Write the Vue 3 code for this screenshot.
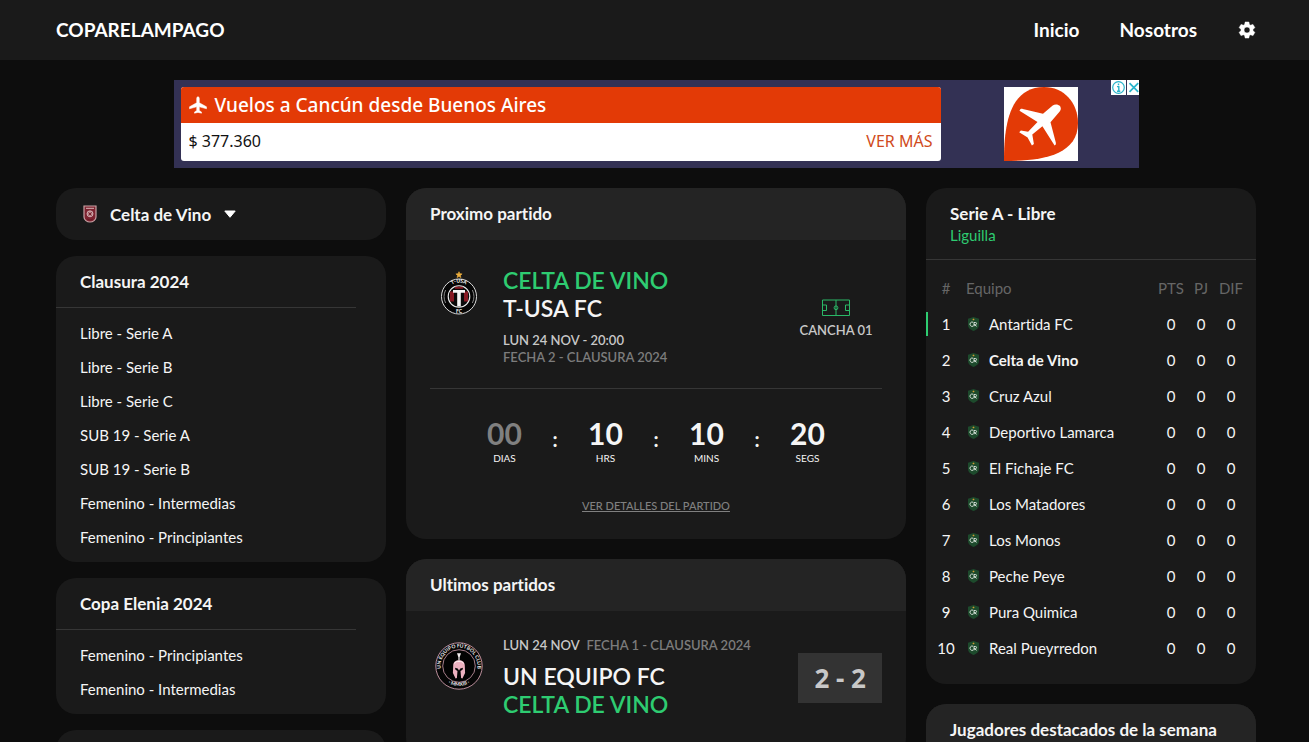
<script setup>
import { ref } from 'vue'

const club = ref('Celta de Vino')

const tournaments = [
  {
    name: 'Clausura 2024',
    series: [
      'Libre - Serie A',
      'Libre - Serie B',
      'Libre - Serie C',
      'SUB 19 - Serie A',
      'SUB 19 - Serie B',
      'Femenino - Intermedias',
      'Femenino - Principiantes',
    ],
  },
  { name: 'Copa Elenia 2024', series: ['Femenino - Principiantes', 'Femenino - Intermedias'] },
]

const countdown = [
  { value: '00', label: 'DIAS', idle: true },
  { value: '10', label: 'HRS' },
  { value: '10', label: 'MINS' },
  { value: '20', label: 'SEGS' },
]

const standings = [
  'Antartida FC',
  'Celta de Vino',
  'Cruz Azul',
  'Deportivo Lamarca',
  'El Fichaje FC',
  'Los Matadores',
  'Los Monos',
  'Peche Peye',
  'Pura Quimica',
  'Real Pueyrredon',
].map((team, i) => ({ pos: i + 1, team, pts: 0, pj: 0, dif: 0 }))
</script>

<template>
  <div class="page">
    <header class="topbar">
      <a class="brand" href="#">COPARELAMPAGO</a>
      <nav class="nav">
        <a href="#">Inicio</a>
        <a href="#">Nosotros</a>
        <button class="gear" type="button" aria-label="Ajustes">
          <svg viewBox="0 0 24 24" width="20" height="20" fill="#fff">
            <path d="M19.14 12.94c.04-.3.06-.61.06-.94 0-.32-.02-.64-.07-.94l2.03-1.58a.49.49 0 0 0 .12-.61l-1.92-3.32a.49.49 0 0 0-.59-.22l-2.39.96c-.5-.38-1.03-.7-1.62-.94l-.36-2.54a.48.48 0 0 0-.48-.41h-3.84c-.24 0-.43.17-.47.41l-.36 2.54c-.59.24-1.13.57-1.62.94l-2.39-.96a.49.49 0 0 0-.59.22L2.74 8.87c-.12.21-.08.47.12.61l2.03 1.58c-.05.3-.09.63-.09.94s.02.64.07.94l-2.03 1.58a.49.49 0 0 0-.12.61l1.92 3.32c.12.22.37.29.59.22l2.39-.96c.5.38 1.03.7 1.62.94l.36 2.54c.05.24.24.41.48.41h3.84c.24 0 .44-.17.47-.41l.36-2.54c.59-.24 1.13-.56 1.62-.94l2.39.96c.22.08.47 0 .59-.22l1.92-3.32a.49.49 0 0 0-.12-.61l-2.01-1.58zM12 15.600A3.600 3.600 0 1 1 12 8.400a3.600 3.600 0 0 1 0 7.200z" stroke="#fff" stroke-width=".6" />
          </svg>
        </button>
      </nav>
    </header>

    <main class="content">
      <aside class="ad">
        <div class="ad-offer">
          <div class="ad-title">
            <svg viewBox="0 0 18 18" width="18" height="18" fill="#fff">
              <path d="M9 .8c.9 0 1.300.8 1.300 1.800v4.100l7.200 4.100v2l-7.200-2v3.700l2.200 1.500v1.200L9 16.400l-3.500.8V16l2.200-1.500v-3.700L.5 12.800v-2l7.200-4.100V2.600C7.700 1.600 8.100.8 9 .8z" stroke="#fff" stroke-width=".5" />
            </svg>
            <span>Vuelos a Cancún desde Buenos Aires</span>
          </div>
          <div class="ad-price">
            <span>$ 377.360</span>
            <a href="#">VER MÁS</a>
          </div>
        </div>
        <div class="ad-side">
          <svg viewBox="0 0 74 74" width="74" height="74">
            <rect width="74" height="74" fill="#fff" />
            <path d="M0 74C0 42 4 0 40 0c20 0 34 16 34 36C74 70 34 74 0 74z" fill="#e33a06" />
            <path d="M15.500 23.800c.4-1.700 1.600-2.300 3.300-1.900L39 26.700l9.700-8.200c1.800-1.500 5-1.500 6.700.1 1.800 1.700 1.900 4 .3 6L46.500 35.200l5.300 20.300c.3 1.500-.1 2.500-1.200 3L38.400 39.300 28.300 47.500l1.600 9.500-2 1.500-4.300-8.100-8.400-5.100 1.700-1.800 7.200 1.300 9.400-9.900z" fill="#fff" />
          </svg>
        </div>
        <div class="ad-marks">
          <button type="button" aria-label="Información del anuncio">
            <svg viewBox="0 0 15 15" width="15" height="15" fill="none" stroke="#29b4cb">
              <circle cx="7.500" cy="7.500" r="5.800" stroke-width="1.200" />
              <path d="M7.500 3.500v1.700M6 6.600h1.800V11M6 11.200h3.300" stroke-width="1.400" />
            </svg>
          </button>
          <button type="button" aria-label="Cerrar anuncio">
            <svg viewBox="0 0 12 15" width="12" height="15" fill="none" stroke="#29b4cb" stroke-width="1.700">
              <path d="M2.500 3.200l8.700 8.700M11.200 3.200l-8.700 8.700" />
            </svg>
          </button>
        </div>
      </aside>

      <div class="columns">
        <section class="col col-left">
          <div class="card picker">
            <svg class="picker-crest" viewBox="0 0 14 18" width="14" height="18">
              <path d="M1 1h12v11c0 3-3 5-6 5s-6-2-6-5z" fill="#7d2330" stroke="#c9a3a6" stroke-width="1.200" />
              <path d="M3 3.300h8" stroke="#d8b8ba" stroke-width="1" />
              <circle cx="7" cy="8.800" r="3" fill="#b77d83" stroke="#e3cfd0" stroke-width=".7" />
              <path d="M5.500 7.500l3 3M8.600 7.400l-3 2.900M4 14l3 1 3-1" stroke="#6a1722" stroke-width=".9" fill="none" />
            </svg>
            <label class="picker-label">
              <select v-model="club" aria-label="Club">
                <option>Celta de Vino</option>
              </select>
              <svg viewBox="0 0 12 8" width="12" height="8" fill="#fff"><path d="M.8 1h10.400L6 7.300z" stroke="#fff" stroke-linejoin="round" /></svg>
            </label>
          </div>

          <div v-for="t in tournaments" :key="t.name" class="card">
            <h2 class="list-title">{{ t.name }}</h2>
            <ul class="series">
              <li v-for="s in t.series" :key="s"><a href="#">{{ s }}</a></li>
            </ul>
          </div>
          <div class="card card-stub"></div>
        </section>

        <section class="col col-mid">
          <article class="card">
            <h2 class="card-head">Proximo partido</h2>
            <div class="card-body">
              <div class="match">
                <div class="crest">
                  <svg viewBox="0 0 48 56" width="48" height="56">
                    <defs>
                      <path id="tusa-arc" d="M11.500 28a12.500 12.500 0 0 1 25 0" />
                    </defs>
                    <path d="M24 4.700l.9 2 2.200.2-1.700 1.500.5 2.200-1.900-1.200-1.900 1.200.5-2.200-1.700-1.500 2.200-.2z" fill="#edae3c" stroke="#edae3c" stroke-width=".6" />
                    <circle cx="24" cy="29.500" r="17.500" fill="#050505" stroke="#dcdcdc" stroke-width="1" />
                    <path d="M10.600 23a15 15 0 0 0 0 13M37.400 23a15 15 0 0 1 0 13" stroke="#a8a8a8" stroke-width=".8" fill="none" />
                    <circle cx="24" cy="29.500" r="10.800" fill="#0a0a0a" stroke="#ececec" stroke-width="1.100" />
                    <path d="M15 24.500h4v10h-4zM29 24.500h4v10h-4zM20 19.700h8v2h-8z" fill="#861923" />
                    <path d="M18 23h12v2.700h-4.200v13.800h-3.600V25.700H18z" fill="#f5f5f5" />
                    <text class="ring-text" fill="#fff"><textPath href="#tusa-arc" startOffset="50%" text-anchor="middle">T-USA</textPath></text>
                    <text class="ring-text" x="24" y="45.500" text-anchor="middle" fill="#fff">FC</text>
                  </svg>
                </div>
                <div class="match-info">
                  <p class="team own">CELTA DE VINO</p>
                  <p class="team">T-USA FC</p>
                  <p class="when below">LUN 24 NOV - 20:00</p>
                  <p class="when round">FECHA 2 - CLAUSURA 2024</p>
                </div>
                <div class="pitch">
                  <svg viewBox="0 0 28 18" width="28" height="18" fill="none" stroke="#2ab867">
                    <path d="M.5 1h27v15.500H.5zM14 1v15.500M.5 6h4v5.500h-4M27.500 6h-4v5.500h4" />
                    <circle cx="14" cy="8.800" r="1.900" />
                  </svg>
                  <span>CANCHA 01</span>
                </div>
              </div>

              <div class="countdown">
                <template v-for="(c, i) in countdown" :key="c.label">
                  <span v-if="i" class="colon">:</span>
                  <div class="unit" :class="{ idle: c.idle }">
                    <strong>{{ c.value }}</strong>
                    <span>{{ c.label }}</span>
                  </div>
                </template>
              </div>
              <a class="details" href="#">VER DETALLES DEL PARTIDO</a>
            </div>
          </article>

          <article class="card">
            <h2 class="card-head">Ultimos partidos</h2>
            <div class="card-body last">
              <div class="match played">
                <div class="crest low">
                  <svg viewBox="0 0 48 48" width="48" height="48">
                    <defs>
                      <path id="ue-top" d="M6.800 30.500a18.400 18.400 0 1 1 34.400 0" />
                      <path id="ue-bottom" d="M13 41a21.500 21.500 0 0 0 22 0" />
                    </defs>
                    <circle cx="24" cy="24" r="23.200" fill="#060606" stroke="#cf9dac" stroke-width=".9" />
                    <circle cx="24" cy="24" r="16.300" fill="#030303" stroke="#cf9dac" stroke-width=".8" />
                    <text class="ring-text" fill="#eee"><textPath href="#ue-top" startOffset="50%" text-anchor="middle">UN EQUIPO FÚTBOL CLUB</textPath></text>
                    <text class="ring-text" fill="#eee"><textPath href="#ue-bottom" startOffset="50%" text-anchor="middle">· MMXIII ·</textPath></text>
                    <path d="M22 11.300h4l-1.400 4v3.500h-1.200v-3.500z" fill="#f4eef0" />
                    <path d="M18.200 23.500c0-3.500 2.600-5.200 5.800-5.200s5.800 1.700 5.800 5.200l.3 7.500-2.700 5.500-1.300-.5-.6-7 2-1.300.5-2-2.700.7-1.300 2-1.300-2-2.700-.7.500 2 2 1.300-.6 7-1.300.5-2.700-5.500z" fill="#edb1c0" />
                    <path d="M19.500 21.500c1.200-1.900 2.500-2.200 4.500-2.200s3.300.3 4.500 2.200" stroke="#fff" stroke-width=".9" fill="none" />
                  </svg>
                </div>
                <div class="match-info">
                  <p class="when above">LUN 24 NOV <span>FECHA 1 - CLAUSURA 2024</span></p>
                  <p class="team">UN EQUIPO FC</p>
                  <p class="team own">CELTA DE VINO</p>
                </div>
                <div class="score">2 - 2</div>
              </div>
            </div>
          </article>
        </section>

        <section class="col col-right">
          <article class="card">
            <div class="table-head">
              <h2>Serie A - Libre</h2>
              <p>Liguilla</p>
            </div>
            <table class="standings">
              <thead>
                <tr>
                  <th class="pos">#</th>
                  <th class="team-col">Equipo</th>
                  <th class="num">PTS</th>
                  <th class="num">PJ</th>
                  <th class="num">DIF</th>
                </tr>
              </thead>
              <tbody>
                <tr v-for="r in standings" :key="r.pos">
                  <td class="pos"><span :class="{ leader: r.pos === 1 }">{{ r.pos }}</span></td>
                  <td class="team-col">
                    <div class="team-cell" :class="{ mine: r.team === club }">
                      <svg viewBox="0 0 13 16" width="13" height="16">
                        <path d="M6.500 1L12 2.700V9c0 3-2.500 4.800-5.500 6C3.500 13.800 1 12 1 9V2.700z" fill="#1d4a2c" />
                        <path d="M6.500 2.800l.6 1h-1.200z" fill="#e0a535" stroke="#e0a535" stroke-width=".8" />
                        <path d="M6.300 6.300a2.200 2.200 0 1 0 0 3.800M7 10.200V6.500h1.500a1 1 0 0 1 0 2.100H7l2.700 1.700" fill="none" stroke="#d5dfd7" stroke-width="1" />
                      </svg>
                      {{ r.team }}
                    </div>
                  </td>
                  <td class="num">{{ r.pts }}</td>
                  <td class="num">{{ r.pj }}</td>
                  <td class="num">{{ r.dif }}</td>
                </tr>
              </tbody>
            </table>
          </article>

          <article class="card card-stub">
            <h2 class="card-head">Jugadores destacados de la semana</h2>
          </article>
        </section>
      </div>
    </main>
  </div>
</template>

<style>
html,
body {
  margin: 0;
  background: #0d0d0d;
}
</style>

<style scoped>
.page {
  height: 100vh;
  overflow-y: auto;
  scrollbar-width: none;
  background: #0d0d0d;
  color: #f5f5f5;
  font-family: Lato, "Open Sans", sans-serif;
  font-size: 15px;
  font-variant-ligatures: none;
}
h2,
p,
ul {
  margin: 0;
  padding: 0;
}
a {
  color: inherit;
  text-decoration: none;
}
button,
select {
  padding: 0;
  border: 0;
  background: none;
  color: inherit;
  font: inherit;
}
svg {
  display: block;
  flex: none;
}
.topbar {
  display: flex;
  align-items: center;
  justify-content: space-between;
  height: 60px;
  padding: 0 52px 0 56px;
  background: #1a1a1a;
}
.brand {
  color: #fff;
  font-size: 19px;
  font-weight: 700;
  line-height: 22px;
}
.nav {
  display: flex;
  align-items: center;
  gap: 40px;
  color: #fff;
  font-size: 19px;
  font-weight: 700;
  line-height: 22px;
}
.content {
  padding: 20px 53px 20px 56px;
}
.ad {
  position: relative;
  display: flex;
  max-width: 965px;
  margin: 0 auto 20px;
  background: #333154;
  font-family: "Noto Sans", "Open Sans", sans-serif;
}
.ad-offer {
  flex: 1;
  margin: 7px 0 7px 7px;
  border-radius: 3px;
  overflow: hidden;
  background: #fff;
}
.ad-title,
.ad-price {
  display: flex;
  align-items: center;
  padding: 0 8px;
}
.ad-title {
  height: 36px;
  gap: 8px;
  background: #e33a06;
  color: #fff;
  font-size: 19px;
  font-weight: 500;
}
.ad-price {
  height: 36px;
  justify-content: space-between;
  padding-bottom: 2px;
  color: #111;
  font-size: 16px;
}
.ad-price a {
  color: #d04a20;
}
.ad-side {
  display: flex;
  align-items: center;
  justify-content: center;
  box-sizing: border-box;
  width: 198px;
  padding-left: 3px;
}
.ad-marks {
  position: absolute;
  top: 0;
  right: 0;
  display: flex;
  gap: 1px;
}
.ad-marks button {
  background: #fff;
}
.columns {
  display: grid;
  grid-template-columns: 33fr 50fr 33fr;
  align-items: start;
  gap: 20px;
}
.col {
  display: flex;
  flex-direction: column;
  gap: 20px;
  min-width: 0;
}
.col-left {
  gap: 16px;
}
.card {
  border-radius: 20px;
  overflow: hidden;
  background: #1a1a1a;
}
.card-stub {
  min-height: 80px;
}
.picker {
  display: flex;
  align-items: center;
  gap: 13px;
  height: 52px;
  padding: 0 27px;
}
.picker-label {
  display: flex;
  align-items: center;
  gap: 12px;
  font-size: 17px;
  font-weight: 700;
}
select {
  appearance: none;
}
.list-title,
.card-head {
  font-size: 17px;
  font-weight: 700;
}
.list-title {
  margin-right: 30px;
  padding-left: 24px;
  border-bottom: 1px solid #363636;
  line-height: 51px;
}
.series {
  padding: 8px 24px;
  list-style: none;
  line-height: 34px;
}
.card-head {
  padding: 0 24px;
  background: #242424;
  line-height: 52px;
}
.card-body {
  padding: 26px 24px 24px;
}
.card-body.last {
  padding: 26px 24px 40px;
}
.match {
  display: flex;
  padding-bottom: 22px;
  border-bottom: 1px solid #363636;
}
.match.played {
  padding: 0;
  border: 0;
}
.crest {
  display: flex;
  justify-content: center;
  align-items: flex-start;
  width: 58px;
  padding-top: 1px;
  margin-right: 15px;
}
.crest.low {
  padding-top: 5px;
}
.ring-text {
  font-size: 5px;
  font-weight: 700;
}
.match-info {
  flex: 1;
}
.team {
  font-size: 23px;
  font-weight: 600;
  line-height: 28px;
}
.team.own {
  color: #2ecc71;
}
.when {
  color: #c8c8c8;
  font-size: 13px;
  font-weight: 600;
  line-height: 17px;
}
.when.below {
  margin-top: 10px;
}
.when.above {
  margin-bottom: 8px;
}
.when.round,
.when span {
  color: #7c7c7c;
}
.when span {
  margin-left: 4px;
}
.pitch {
  display: flex;
  flex-direction: column;
  align-items: center;
  justify-content: center;
  gap: 4px;
  width: 92px;
  padding-top: 5px;
  color: #c8c8c8;
  font-size: 13px;
  font-weight: 600;
  line-height: 18px;
}
.countdown {
  display: flex;
  justify-content: center;
  margin-top: 27px;
}
.unit {
  display: flex;
  flex-direction: column;
  align-items: center;
  gap: 1px;
  width: 71px;
}
.unit strong {
  font-size: 30px;
  line-height: 34px;
}
.unit.idle strong {
  color: #808080;
}
.unit span {
  font-size: 10px;
  line-height: 14px;
}
.colon {
  width: 30px;
  padding-top: 11px;
  font-size: 20px;
  font-weight: 700;
  line-height: 24px;
  text-align: center;
}
.details {
  display: block;
  width: fit-content;
  margin: 33px auto 0;
  padding-bottom: 1px;
  color: #808080;
  font-size: 11px;
  font-weight: 500;
  line-height: 16px;
  text-decoration: underline;
}
.score {
  align-self: center;
  padding: 0 16px;
  background: #333;
  color: #c8c8c8;
  font-family: "Noto Sans", sans-serif;
  font-size: 26px;
  font-weight: 700;
  line-height: 50px;
}
.table-head {
  padding: 16px 24px 13px;
  border-bottom: 1px solid #363636;
}
.table-head h2 {
  font-size: 17px;
  line-height: 20px;
}
.table-head p {
  color: #2ecc71;
  font-size: 15px;
  line-height: 22px;
}
.standings {
  width: 100%;
  margin: 10px 0 18px;
  padding-right: 10px;
  border-spacing: 0;
  table-layout: fixed;
}
.standings th,
.standings td {
  height: 36px;
  padding: 0;
  font-weight: 400;
  text-align: center;
}
.standings th {
  color: #666;
}
.standings .pos {
  width: 40px;
}
.standings .num {
  width: 30px;
}
.standings .team-col {
  text-align: left;
}
.pos span {
  display: block;
  line-height: 24px;
}
.pos .leader {
  border-left: 2px solid #2ecc71;
  padding-right: 2px;
}
.team-cell {
  display: flex;
  align-items: center;
  gap: 9px;
  padding-left: 1px;
}
.team-cell.mine {
  font-weight: 700;
}
</style>
